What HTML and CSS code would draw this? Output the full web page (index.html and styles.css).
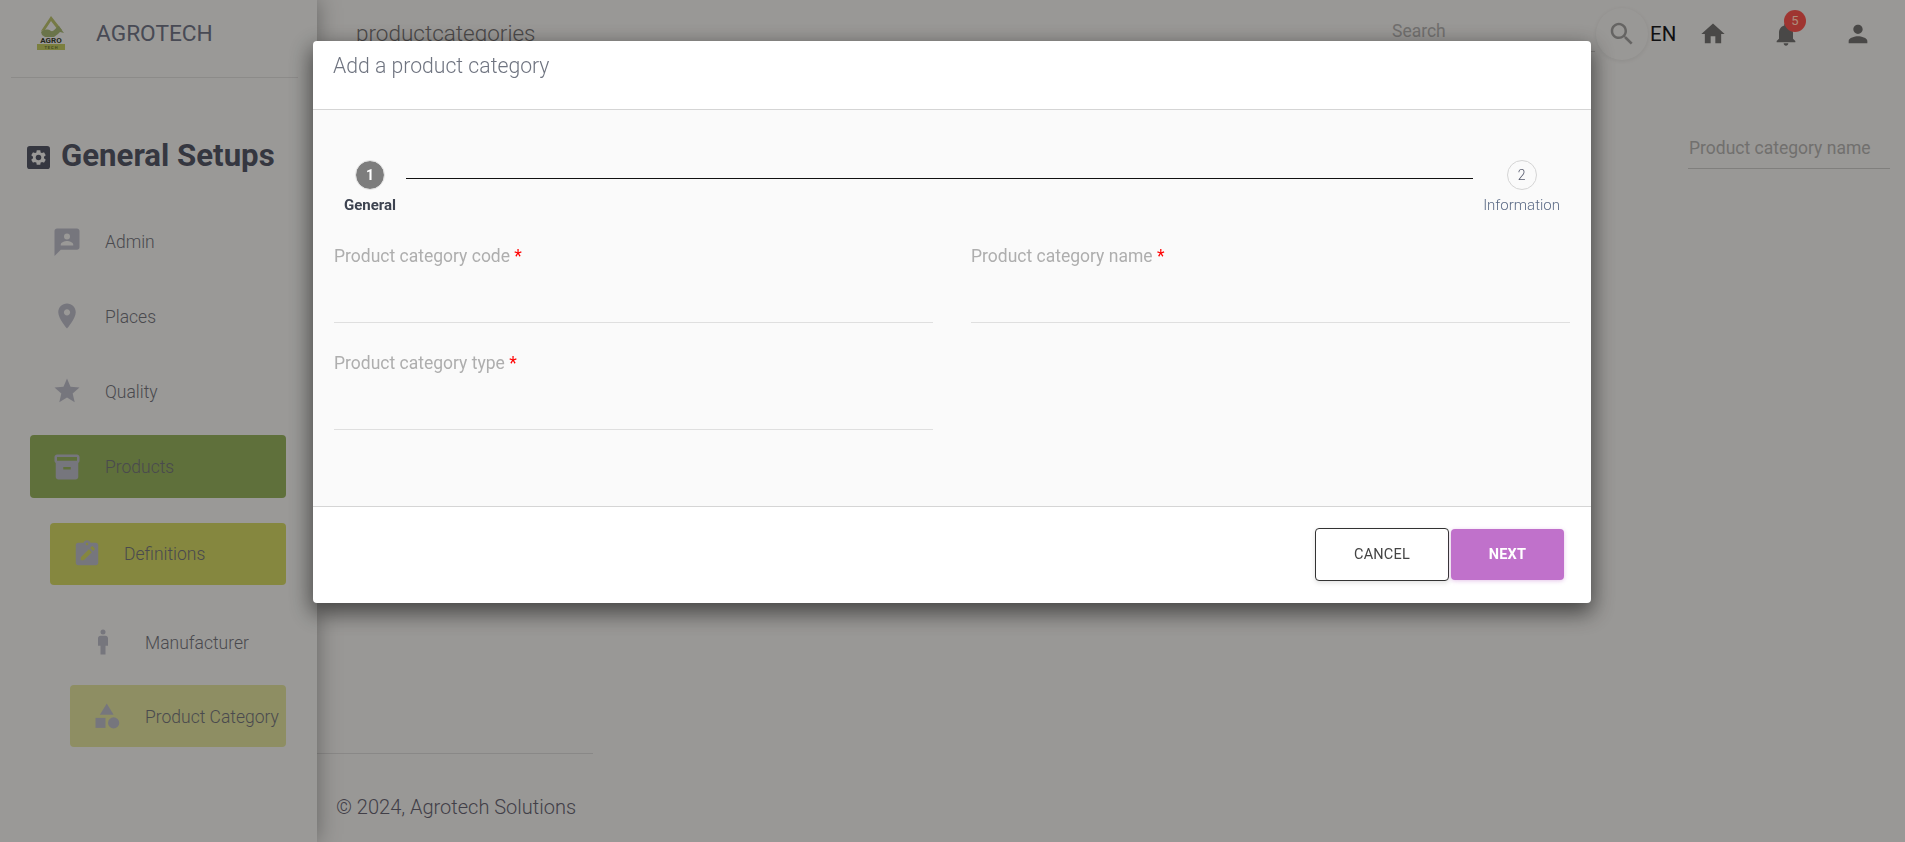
FILE: index.html
```html
<!DOCTYPE html>
<html lang="en">
<head>
<meta charset="utf-8">
<title>Agrotech</title>
<link rel="stylesheet" href="styles.css">
</head>
<body>
<div class="app">
  <aside class="sidebar">
    <div class="brand">
      <svg class="logo" viewBox="0 0 30 38">
        <path d="M15 1 26 15 22 15 15 6 9 15 5 16z" fill="#aeb466"/>
        <path d="M5 17c3-3 7-3 10-1 3 1 5-4 8-5l2 3 3 4-4-1-2 2-4 3H9l-3-2z" fill="#9dab6e"/>
        <text x="15" y="28" class="logo-agro" text-anchor="middle">AGRO</text>
        <rect x="1" y="29" width="28" height="6" fill="#b6bc5c"/>
        <text x="15" y="34" class="logo-tech" text-anchor="middle">T E C H</text>
      </svg>
      <span class="brand-name">AGROTECH</span>
    </div>
    <h2 class="section-title">
      <svg class="section-icon" viewBox="0 0 24 24"><rect x="0" y="0" width="24" height="24" rx="3" fill="#4f515f"/><g transform="translate(2.4 2.4) scale(.8)"><path fill="#e3e2df" d="M19.14 12.94c.04-.3.06-.61.06-.94 0-.32-.02-.64-.07-.94l2.03-1.58c.18-.14.23-.41.12-.61l-1.92-3.32c-.12-.22-.37-.29-.59-.22l-2.39.96c-.5-.38-1.03-.7-1.62-.94l-.36-2.54c-.04-.24-.24-.41-.48-.41h-3.84c-.24 0-.43.17-.47.41l-.36 2.54c-.59.24-1.13.57-1.62.94l-2.39-.96c-.22-.08-.47 0-.59.22L2.74 8.87c-.12.21-.08.47.12.61l2.03 1.58c-.05.3-.09.63-.09.94s.02.64.07.94l-2.03 1.58c-.18.14-.23.41-.12.61l1.92 3.32c.12.22.37.29.59.22l2.39-.96c.5.38 1.03.7 1.62.94l.36 2.54c.05.24.24.41.48.41h3.84c.24 0 .44-.17.47-.41l.36-2.54c.59-.24 1.13-.56 1.62-.94l2.39.96c.22.08.47 0 .59-.22l1.92-3.32c.12-.22.07-.47-.12-.61l-2.01-1.58z"/><circle cx="12" cy="12" r="3.600" fill="#4f515f"/></g></svg>
      General Setups
    </h2>
    <nav class="nav">
      <a class="nav-item">
        <svg class="nav-icon" viewBox="0 0 24 24"><path fill-rule="evenodd" d="M20 2H4c-1.100 0-2 .9-2 2v20l5-5h13c1.100 0 2-.9 2-2V4c0-1.100-.9-2-2-2zM12 6a2.400 2.400 0 1 1 0 4.800a2.400 2.400 0 0 1 0-4.800zM7 15c0-2 3.200-3 5-3s5 1 5 3v.5H7z"/></svg>
        <span>Admin</span>
      </a>
      <a class="nav-item">
        <svg class="nav-icon" viewBox="0 0 24 24"><path d="M12 2C8.130 2 5 5.130 5 9c0 5.250 7 13 7 13s7-7.750 7-13c0-3.870-3.130-7-7-7zm0 9.500c-1.380 0-2.500-1.120-2.500-2.500s1.120-2.500 2.500-2.500 2.500 1.120 2.500 2.500-1.120 2.500-2.500 2.500z"/></svg>
        <span>Places</span>
      </a>
      <a class="nav-item">
        <svg class="nav-icon" viewBox="0 0 24 24"><path d="M12 17.270L18.180 21l-1.640-7.030L22 9.240l-7.190-.61L12 2 9.190 8.630 2 9.240l5.460 4.730L5.820 21z"/></svg>
        <span>Quality</span>
      </a>
      <a class="nav-item nav-active">
        <svg class="nav-icon" viewBox="0 0 24 24"><path d="M20 2H4c-1 0-2 .9-2 2v3.010c0 .72.43 1.340 1 1.690V20c0 1.100 1.100 2 2 2h14c.9 0 2-.9 2-2V8.700c.57-.35 1-.97 1-1.690V4c0-1.100-1-2-2-2zm-5 12H9v-2h6v2zm5-7H4V4l16-.02V7z"/></svg>
        <span>Products</span>
      </a>
      <a class="nav-item sub nav-open">
        <svg class="nav-icon" viewBox="0 0 24 24"><path fill-rule="evenodd" d="M19 3h-4.180C14.400 1.840 13.300 1 12 1s-2.400.84-2.820 2H5c-1.100 0-2 .9-2 2v14c0 1.100.9 2 2 2h14c1.100 0 2-.9 2-2V5c0-1.100-.9-2-2-2zm-7 0c.55 0 1 .45 1 1s-.45 1-1 1-1-.45-1-1 .45-1 1-1zM7 17v-2.400l6.500-6.500 2.400 2.400-6.500 6.500zM14.500 7.100l1.200-1.200a.7.7 0 0 1 1 0l1.400 1.400a.7.7 0 0 1 0 1l-1.200 1.200z"/></svg>
        <span>Definitions</span>
      </a>
      <a class="nav-item leaf">
        <svg class="nav-icon" viewBox="0 0 24 24"><circle cx="12" cy="4" r="2"/><path d="M14 7h-4c-1.100 0-2 .9-2 2v6h2v7h4v-7h2V9c0-1.100-.9-2-2-2z"/></svg>
        <span>Manufacturer</span>
      </a>
      <a class="nav-item leaf nav-current">
        <svg class="nav-icon" viewBox="-3 0 24 24"><path d="M12 2l-5.500 9h11z"/><circle cx="17.500" cy="17.500" r="4.500"/><rect x="3" y="13.500" width="8" height="8"/></svg>
        <span>Product Category</span>
      </a>
    </nav>
  </aside>
  <main class="main">
    <header class="topbar">
      <span class="page-title">productcategories</span>
      <div class="search-field">Search</div>
      <button class="search-btn"><svg viewBox="0 0 24 24"><path d="M15.500 14h-.79l-.28-.27C15.410 12.590 16 11.110 16 9.500 16 5.910 13.090 3 9.500 3S3 5.910 3 9.500 5.910 16 9.500 16c1.610 0 3.090-.59 4.230-1.570l.27.28v.79l5 4.990L20.490 19l-4.990-5zm-6 0C7.010 14 5 11.990 5 9.500S7.010 5 9.500 5 14 7.010 14 9.500 11.990 14 9.500 14z"/></svg></button>
      <span class="lang">EN</span>
      <button class="top-icon"><svg viewBox="0 0 24 24"><path d="M10 20v-6h4v6h5v-8h3L12 3 2 12h3v8z"/></svg></button>
      <button class="top-icon bell"><svg viewBox="0 0 24 24"><path d="M12 22c1.100 0 2-.9 2-2h-4c0 1.100.89 2 2 2zm6-6v-5c0-3.070-1.640-5.640-4.500-6.320V4c0-.83-.67-1.500-1.500-1.500s-1.500.67-1.500 1.500v.68C7.630 5.360 6 7.920 6 11v5l-2 2v1h16v-1l-2-2z"/></svg><span class="badge">5</span></button>
      <button class="top-icon"><svg viewBox="0 0 24 24"><path d="M12 12c2.210 0 4-1.790 4-4s-1.790-4-4-4-4 1.790-4 4 1.790 4 4 4zm0 2c-2.670 0-8 1.340-8 4v2h16v-2c0-2.660-5.330-4-8-4z"/></svg></button>
    </header>
    <div class="filters"><div class="filter-field">Product category name</div></div>
    <footer class="page-footer">
      <div class="footer-rule"></div>
      <p class="copyright">© 2024, Agrotech Solutions</p>
    </footer>
  </main>
</div>
<div class="overlay">
  <section class="dialog">
    <div class="dialog-head">Add a product category</div>
    <div class="dialog-body">
      <div class="stepper">
        <div class="step step-on"><span class="step-dot">1</span><span class="step-label">General</span></div>
        <div class="step-line"></div>
        <div class="step"><span class="step-dot">2</span><span class="step-label">Information</span></div>
      </div>
      <div class="fields">
        <div class="field"><label>Product category code <b>*</b></label></div>
        <div class="field"><label>Product category name <b>*</b></label></div>
        <div class="field"><label>Product category type <b>*</b></label></div>
      </div>
    </div>
    <div class="dialog-foot">
      <button class="btn btn-cancel">CANCEL</button>
      <button class="btn btn-next">NEXT</button>
    </div>
  </section>
</div>
</body>
</html>
```
FILE: styles.css
```css
* { box-sizing: border-box; }
html, body { margin: 0; height: 100%; overflow: hidden; }
body { font-family: Roboto, "Liberation Sans", sans-serif; background: #e2e0dd; }
button { font-family: inherit; border: 0; background: none; padding: 0; }

.app { display: flex; height: 842px; }

.sidebar { width: 317px; flex: none; background: #e3e2df; box-shadow: 0 0 22px rgba(0,0,0,.35); position: relative; padding: 0 11px 0 0; }
.brand { height: 78px; margin: 0 8px 0 11px; border-bottom: 1px solid #cfcdcb; display: flex; align-items: center; padding: 0 0 10px 25px; }
.logo { width: 30px; height: 38px; }
.logo-agro { font: 700 8px Roboto, sans-serif; fill: #353a2a; }
.logo-tech { font: 700 4px Roboto, sans-serif; fill: #5d6b30; }
.brand-name { margin-left: 30px; font-size: 22.7px; font-weight: 400; color: #6a6d7d; }

.section-title { margin: 55px 0 0 27px; display: flex; align-items: center; gap: 11px; font-size: 31.2px; line-height: 46px; font-weight: 700; color: #4f515f; }
.section-icon { width: 23px; height: 23px; margin-top: 2px; }

.nav { display: flex; flex-direction: column; margin-top: 31px; }
.nav-item { height: 62px; margin: 0 20px 13px 30px; border-radius: 4px; display: flex; align-items: center; padding-left: 22px; font-size: 17.5px; font-weight: 300; color: #6d6d74; }
.nav-item span { padding-top: 2px; }
.nav-icon { width: 30px; height: 30px; fill: #afaeb9; flex: none; margin-right: 23px; overflow: visible; }
.nav-active { height: 63px; margin-bottom: 25px; background: #8ca558; }
.nav-active span { padding-top: 0; }
.sub { margin-left: 50px; margin-bottom: 26px; }
.sub .nav-icon { margin-right: 22px; }
.sub span { padding-top: 0; }
.nav-open { background: #c4c75e; }
.leaf { margin-left: 70px; margin-bottom: 12px; padding-left: 18px; }
.leaf .nav-icon { margin-right: 27px; }
.nav-current { background: #d1d292; }

.main { flex: 1; min-width: 0; display: flex; flex-direction: column; }
.topbar { display: flex; align-items: center; height: 68px; flex: none; padding: 0 14px 0 39px; }
.page-title { font-size: 22.5px; font-weight: 300; color: #6e6b6b; margin-top: -2px; }
.search-field { margin-left: auto; width: 203px; height: 36px; border-bottom: 1px solid #bdbbb9; font-size: 17.5px; color: #a7a5a3; line-height: 30px; }
.search-btn { width: 52px; height: 52px; border-radius: 50%; margin-left: 1px; box-shadow: 0 1px 4px rgba(0,0,0,.08); display: flex; align-items: center; justify-content: center; }
.search-btn svg { width: 30px; height: 30px; fill: #969492; }
.lang { margin-left: 2px; width: 24px; font-size: 20.5px; font-weight: 400; color: #19191b; }
.top-icon { width: 24px; height: 30px; position: relative; margin-left: 27px; margin-right: 21px; display: flex; align-items: center; justify-content: center; }
.top-icon svg { width: 28px; height: 28px; fill: #6c6b69; flex: none; }
.bell { margin-left: 28px; }
.badge { position: absolute; left: 10px; top: -9px; width: 22px; height: 22px; border-radius: 50%; background: #ea4f49; color: #ffd0b8; font-size: 13px; line-height: 22px; text-align: center; }

.filters { display: flex; justify-content: flex-end; padding: 65px 15px 0 0; }
.filter-field { width: 202px; height: 36px; border-bottom: 1px solid #bdbbb9; padding-left: 1px; font-size: 17.5px; color: #a7a5a3; line-height: 30px; }

.page-footer { margin-top: auto; }
.footer-rule { width: 276px; border-top: 1px solid #cbc9c7; }
.copyright { margin: 0; padding: 41px 0 23px 19px; font-size: 20px; line-height: 24px; font-weight: 300; color: #615d6a; }

.overlay { position: fixed; inset: 0; background: rgba(0,0,0,.32); display: flex; justify-content: center; align-items: flex-start; padding: 41px 1px 0 0; }
.dialog { width: 1278px; background: #fff; border-radius: 4px; box-shadow: 0 8px 22px 2px rgba(0,0,0,.55); overflow: hidden; }
.dialog-head { height: 69px; padding: 13px 20px 0; border-bottom: 1px solid #d5d5d5; font-size: 21.2px; line-height: 24px; font-weight: 300; color: #6f7480; }
.dialog-body { background: #fafafa; padding: 50px 0 76px; height: 397px; border-bottom: 1px solid #d5d5d5; }
.stepper { display: flex; padding: 0 31px; align-items: flex-start; }
.step { display: flex; flex-direction: column; align-items: center; gap: 5px; font-size: 15px; font-weight: 300; color: #5b6a85; }
.step-dot { width: 30px; height: 30px; border-radius: 50%; border: 1px solid #d4d4d4; display: flex; align-items: center; justify-content: center; font-size: 14px; color: #55596b; }
.step-label { line-height: 20px; }
.step-on { font-weight: 700; color: #3d4350; }
.step-on .step-dot { background: #7d7d7d; color: #fff; background-clip: padding-box; border: 1px solid #e0e0e0; font-weight: 700; }
.step-line { flex: 1; height: 1px; background: #111; margin: 18px 10px 0; }
.fields { display: grid; grid-template-columns: 599px 599px; column-gap: 38px; row-gap: 29px; padding: 30px 0 0 21px; }
.field { height: 78px; border-bottom: 1px solid #dfdfdf; }
.field label { display: block; font-size: 17.5px; line-height: 22px; font-weight: 400; color: #aeaeae; }
.field b { color: #f00; font-weight: 400; }

.dialog-foot { height: 96px; display: flex; justify-content: flex-end; align-items: center; padding: 0 27px 1px 0; gap: 2px; }
.btn { height: 51px; border-radius: 4px; font-size: 14.5px; letter-spacing: .2px; cursor: pointer; }
.btn-cancel { width: 134px; height: 53px; background: #fff; border: 1px solid #333; color: #444; box-shadow: 0 2px 5px rgba(0,0,0,.12); }
.btn-next { width: 113px; background: #c071cb; color: #fff; font-weight: 700; box-shadow: 0 1px 4px rgba(192,113,203,.4); }
```
